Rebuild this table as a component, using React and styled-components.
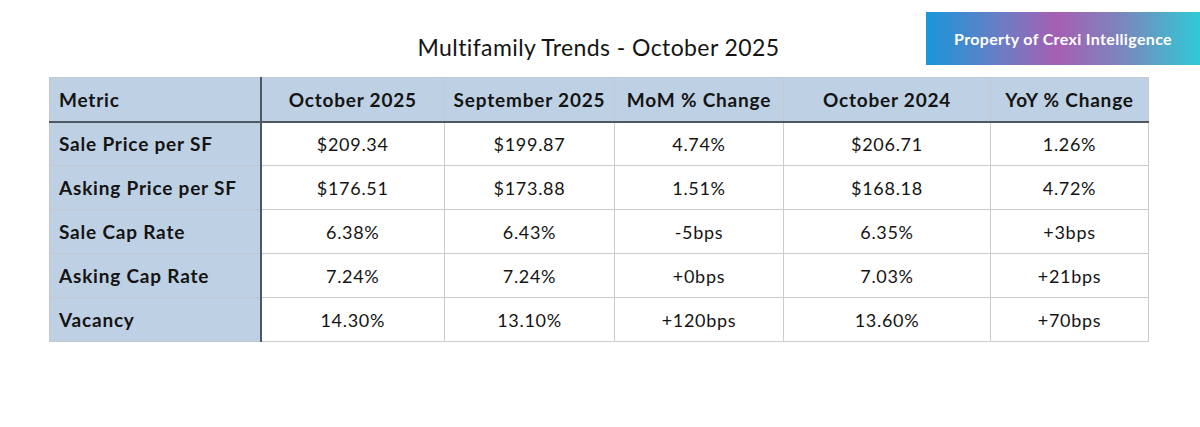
import React from "react";
import styled, { createGlobalStyle } from "styled-components";

const GlobalStyle = createGlobalStyle`
  html, body {
    margin: 0;
    padding: 0;
    background: #ffffff;
  }
  body {
    font-family: Lato, "Noto Sans", sans-serif;
    color: #111111;
  }
`;

// page frame
const Page = styled.div`
  position: relative;
  width: 1200px;
  height: 427px;
  background: #ffffff;
  padding: 30px 0 0 49px;
  box-sizing: border-box;
`;

const Title = styled.h1`
  margin: 0 0 13px 0;
  width: 1099px;
  text-align: center;
  font-size: 23px;
  font-weight: 400;
  letter-spacing: 0.4px;
  line-height: 34px;
  color: #141414;
`;

const Badge = styled.div`
  position: absolute;
  top: 12px;
  left: 926px;
  width: 274px;
  height: 53px;
  display: flex;
  align-items: center;
  justify-content: center;
  background: linear-gradient(90deg, #1897d9 0%, #6d7cc4 28%, #a65fb2 48%, #7a87be 72%, #2fcad6 100%);
  color: #ffffff;
  font-size: 16px;
  font-weight: 700;
  letter-spacing: 0.35px;
`;

const Table = styled.table`
  width: 1099px;
  border-collapse: collapse;
  table-layout: fixed;
`;

const HeadCell = styled.th`
  height: 44px;
  padding: 0 4px;
  background: #bed0e3;
  border: 1px solid #c3c9d0;
  border-bottom: 2px solid #4f5861;
  border-right: ${(p) => (p.$first ? "2px solid #4f5861" : "1px solid #c3c9d0")};
  font-size: 19px;
  font-weight: 700;
  letter-spacing: 0.8px;
  white-space: nowrap;
  text-align: ${(p) => (p.$first ? "left" : "center")};
  padding-left: ${(p) => (p.$first ? "9px" : "4px")};
  color: #141414;
  box-sizing: border-box;
`;

const LabelCell = styled.td`
  height: 44px;
  padding: 0 9px;
  background: #bed0e3;
  border: 1px solid #c3c9d0;
  border-right: 2px solid #4f5861;
  font-size: 19px;
  font-weight: 700;
  letter-spacing: 0.8px;
  white-space: nowrap;
  text-align: left;
  color: #141414;
  box-sizing: border-box;
`;

const ValueCell = styled.td`
  height: 44px;
  padding: 0 6px;
  border: 1px solid #cccccc;
  font-size: 18px;
  font-weight: 400;
  letter-spacing: 0.7px;
  text-align: center;
  color: #141414;
  box-sizing: border-box;
`;

const columns = [
  { label: "Metric", width: 211 },
  { label: "October 2025", width: 184 },
  { label: "September 2025", width: 170 },
  { label: "MoM % Change", width: 169 },
  { label: "October 2024", width: 207 },
  { label: "YoY % Change", width: 158 },
];

const rows = [
  ["Sale Price per SF", "$209.34", "$199.87", "4.74%", "$206.71", "1.26%"],
  ["Asking Price per SF", "$176.51", "$173.88", "1.51%", "$168.18", "4.72%"],
  ["Sale Cap Rate", "6.38%", "6.43%", "-5bps", "6.35%", "+3bps"],
  ["Asking Cap Rate", "7.24%", "7.24%", "+0bps", "7.03%", "+21bps"],
  ["Vacancy", "14.30%", "13.10%", "+120bps", "13.60%", "+70bps"],
];

export default function App() {
  return (
    <>
      <GlobalStyle />
      <Page>
        <Badge>Property of Crexi Intelligence</Badge>
        <Title>Multifamily Trends - October 2025</Title>
        <Table>
          <colgroup>
            {columns.map((c) => (
              <col key={c.label} style={{ width: c.width }} />
            ))}
          </colgroup>
          <thead>
            <tr>
              {columns.map((c, i) => (
                <HeadCell key={c.label} $first={i === 0}>
                  {c.label}
                </HeadCell>
              ))}
            </tr>
          </thead>
          <tbody>
            {rows.map((r) => (
              <tr key={r[0]}>
                <LabelCell>{r[0]}</LabelCell>
                {r.slice(1).map((v, j) => (
                  <ValueCell key={j}>{v}</ValueCell>
                ))}
              </tr>
            ))}
          </tbody>
        </Table>
      </Page>
    </>
  );
}
